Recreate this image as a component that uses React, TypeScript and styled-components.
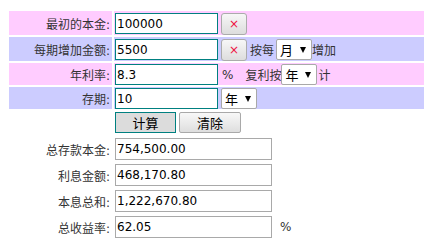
import { Fragment } from 'react'
import styled, { createGlobalStyle } from 'styled-components'

const GlobalStyle = createGlobalStyle`
	body {
		margin: 0;
		background: #fff;
		font-family: 'DejaVu Sans', 'Noto Sans CJK SC', sans-serif;
		font-size: 12px;
		color: #333;
	}
`

type Tone = 'pink' | 'blue'

const tones: Record<Tone, string> = {
	pink: '#ffccff',
	blue: '#ccccff',
}

const Page = styled.div`
	padding: 11px 0 0 9px;
	display: flex;
	flex-direction: column;
	align-items: flex-start;
`

const Form = styled.div`
	display: flex;
	flex-direction: column;
	gap: 2px;
`

const FormRow = styled.div<{ $tone: Tone; $height: number }>`
	display: grid;
	grid-template-columns: 103px 310px;
	column-gap: 2px;
	height: ${({ $height }) => $height}px;

	& > div {
		background: ${({ $tone }) => tones[$tone]};
	}
`

const LabelCell = styled.div`
	display: flex;
	align-items: center;
	justify-content: flex-end;
	padding: 1px 2px 0 0;
	white-space: nowrap;
`

const ValueCell = styled.div`
	display: flex;
	align-items: center;
	padding: 1px 0 0 1px;
	white-space: nowrap;
`

const NumInput = styled.input`
	box-sizing: border-box;
	width: 103px;
	height: 21px;
	border: 1px solid #008080;
	padding: 0 1px;
	margin: 0;
	font-family: 'DejaVu Sans', sans-serif;
	font-size: 12px;
	color: #000;
	background: #fff;
	outline: none;
`

const ClearButton = styled.button`
	box-sizing: border-box;
	width: 26px;
	height: 22px;
	margin: 0 0 0 3px;
	padding: 0;
	border: 1px solid #ababab;
	border-radius: 3px;
	background: linear-gradient(#f7f7f7, #dddddd);
	color: #ee1144;
	font-family: 'DejaVu Sans', sans-serif;
	font-size: 12px;
	line-height: 20px;
`

const Word = styled.span<{ $left?: number; $right?: number }>`
	margin-left: ${({ $left }) => $left ?? 0}px;
	margin-right: ${({ $right }) => $right ?? 0}px;
	font-size: 12px;
	color: #333;
`

const Percent = styled.span<{ $left: number }>`
	margin-left: ${({ $left }) => $left}px;
	font-family: 'DejaVu Sans', sans-serif;
	font-size: 12px;
	color: #333;
`

const SelectBox = styled.span<{ $left: number }>`
	position: relative;
	display: inline-block;
	margin-left: ${({ $left }) => $left}px;

	&::after {
		content: '';
		position: absolute;
		right: 6px;
		top: 8px;
		border-left: 3px solid transparent;
		border-right: 3px solid transparent;
		border-top: 6px solid #000;
		pointer-events: none;
	}

	select {
		appearance: none;
		box-sizing: border-box;
		width: 36px;
		height: 21px;
		margin: 0;
		padding: 0 0 0 3px;
		border: 1px solid #a9a9a9;
		border-radius: 2px;
		background: #fff;
		color: #000;
		font-family: 'Noto Sans CJK SC', sans-serif;
		font-size: 13px;
		outline: none;
	}
`

const Actions = styled.div`
	display: flex;
	gap: 3px;
	margin: 3px 0 0 106px;
`

const ActionButton = styled.button<{ $primary?: boolean }>`
	box-sizing: border-box;
	width: ${({ $primary }) => ($primary ? 61 : 62)}px;
	height: 21px;
	margin: 0;
	padding: 0;
	border: 1px solid ${({ $primary }) => ($primary ? '#008080' : '#a9a9a9')};
	border-radius: ${({ $primary }) => ($primary ? 0 : 2)}px;
	background: ${({ $primary }) => ($primary ? '#dcdcdc' : 'linear-gradient(#f8f8f8, #dedede)')};
	color: #000;
	font-family: 'Noto Sans CJK SC', sans-serif;
	font-size: 13px;
	line-height: 19px;
`

const Results = styled.div`
	display: grid;
	grid-template-columns: 103px auto auto;
	column-gap: 3px;
	row-gap: 4px;
	margin-top: 5px;
	align-items: center;
`

const ResultLabel = styled.span`
	text-align: right;
	padding-right: 2px;
	white-space: nowrap;
`

const ResultInput = styled.input`
	box-sizing: border-box;
	width: 157px;
	height: 22px;
	border: 1px solid #a9a9a9;
	padding: 0 1px;
	margin: 0;
	font-family: 'DejaVu Sans', sans-serif;
	font-size: 12px;
	color: #000;
	background: #fff;
	outline: none;
`

const Unit = styled.span`
	margin-left: 5px;
	font-family: 'DejaVu Sans', sans-serif;
	font-size: 12px;
	color: #333;
`

const results = [
	{ label: '总存款本金:', value: '754,500.00' },
	{ label: '利息金额:', value: '468,170.80' },
	{ label: '本息总和:', value: '1,222,670.80' },
	{ label: '总收益率:', value: '62.05', unit: '%' },
]

export default function App() {
	return (
		<>
			<GlobalStyle />
			<Page>
				<Form>
					<FormRow $tone='pink' $height={24}>
						<LabelCell>最初的本金:</LabelCell>
						<ValueCell>
							<NumInput defaultValue='100000' />
							<ClearButton>×</ClearButton>
						</ValueCell>
					</FormRow>
					<FormRow $tone='blue' $height={24}>
						<LabelCell>每期增加金额:</LabelCell>
						<ValueCell>
							<NumInput defaultValue='5500' />
							<ClearButton>×</ClearButton>
							<Word $left={3}>按每</Word>
							<SelectBox $left={2}>
								<select defaultValue='月'>
									<option>月</option>
									<option>年</option>
								</select>
							</SelectBox>
							<Word>增加</Word>
						</ValueCell>
					</FormRow>
					<FormRow $tone='pink' $height={22}>
						<LabelCell>年利率:</LabelCell>
						<ValueCell>
							<NumInput defaultValue='8.3' />
							<Percent $left={4}>%</Percent>
							<Word $left={12}>复利按</Word>
							<SelectBox $left={0}>
								<select defaultValue='年'>
									<option>年</option>
									<option>月</option>
								</select>
							</SelectBox>
							<Word $left={1}>计</Word>
						</ValueCell>
					</FormRow>
					<FormRow $tone='blue' $height={22}>
						<LabelCell>存期:</LabelCell>
						<ValueCell>
							<NumInput defaultValue='10' />
							<SelectBox $left={3}>
								<select defaultValue='年'>
									<option>年</option>
									<option>月</option>
								</select>
							</SelectBox>
						</ValueCell>
					</FormRow>
				</Form>

				<Actions>
					<ActionButton $primary>计算</ActionButton>
					<ActionButton>清除</ActionButton>
				</Actions>

				<Results>
					{results.map(r => (
						<Fragment key={r.label}>
							<ResultLabel>{r.label}</ResultLabel>
							<ResultInput readOnly defaultValue={r.value} />
							{r.unit ? <Unit>{r.unit}</Unit> : <span />}
						</Fragment>
					))}
				</Results>
			</Page>
		</>
	)
}
